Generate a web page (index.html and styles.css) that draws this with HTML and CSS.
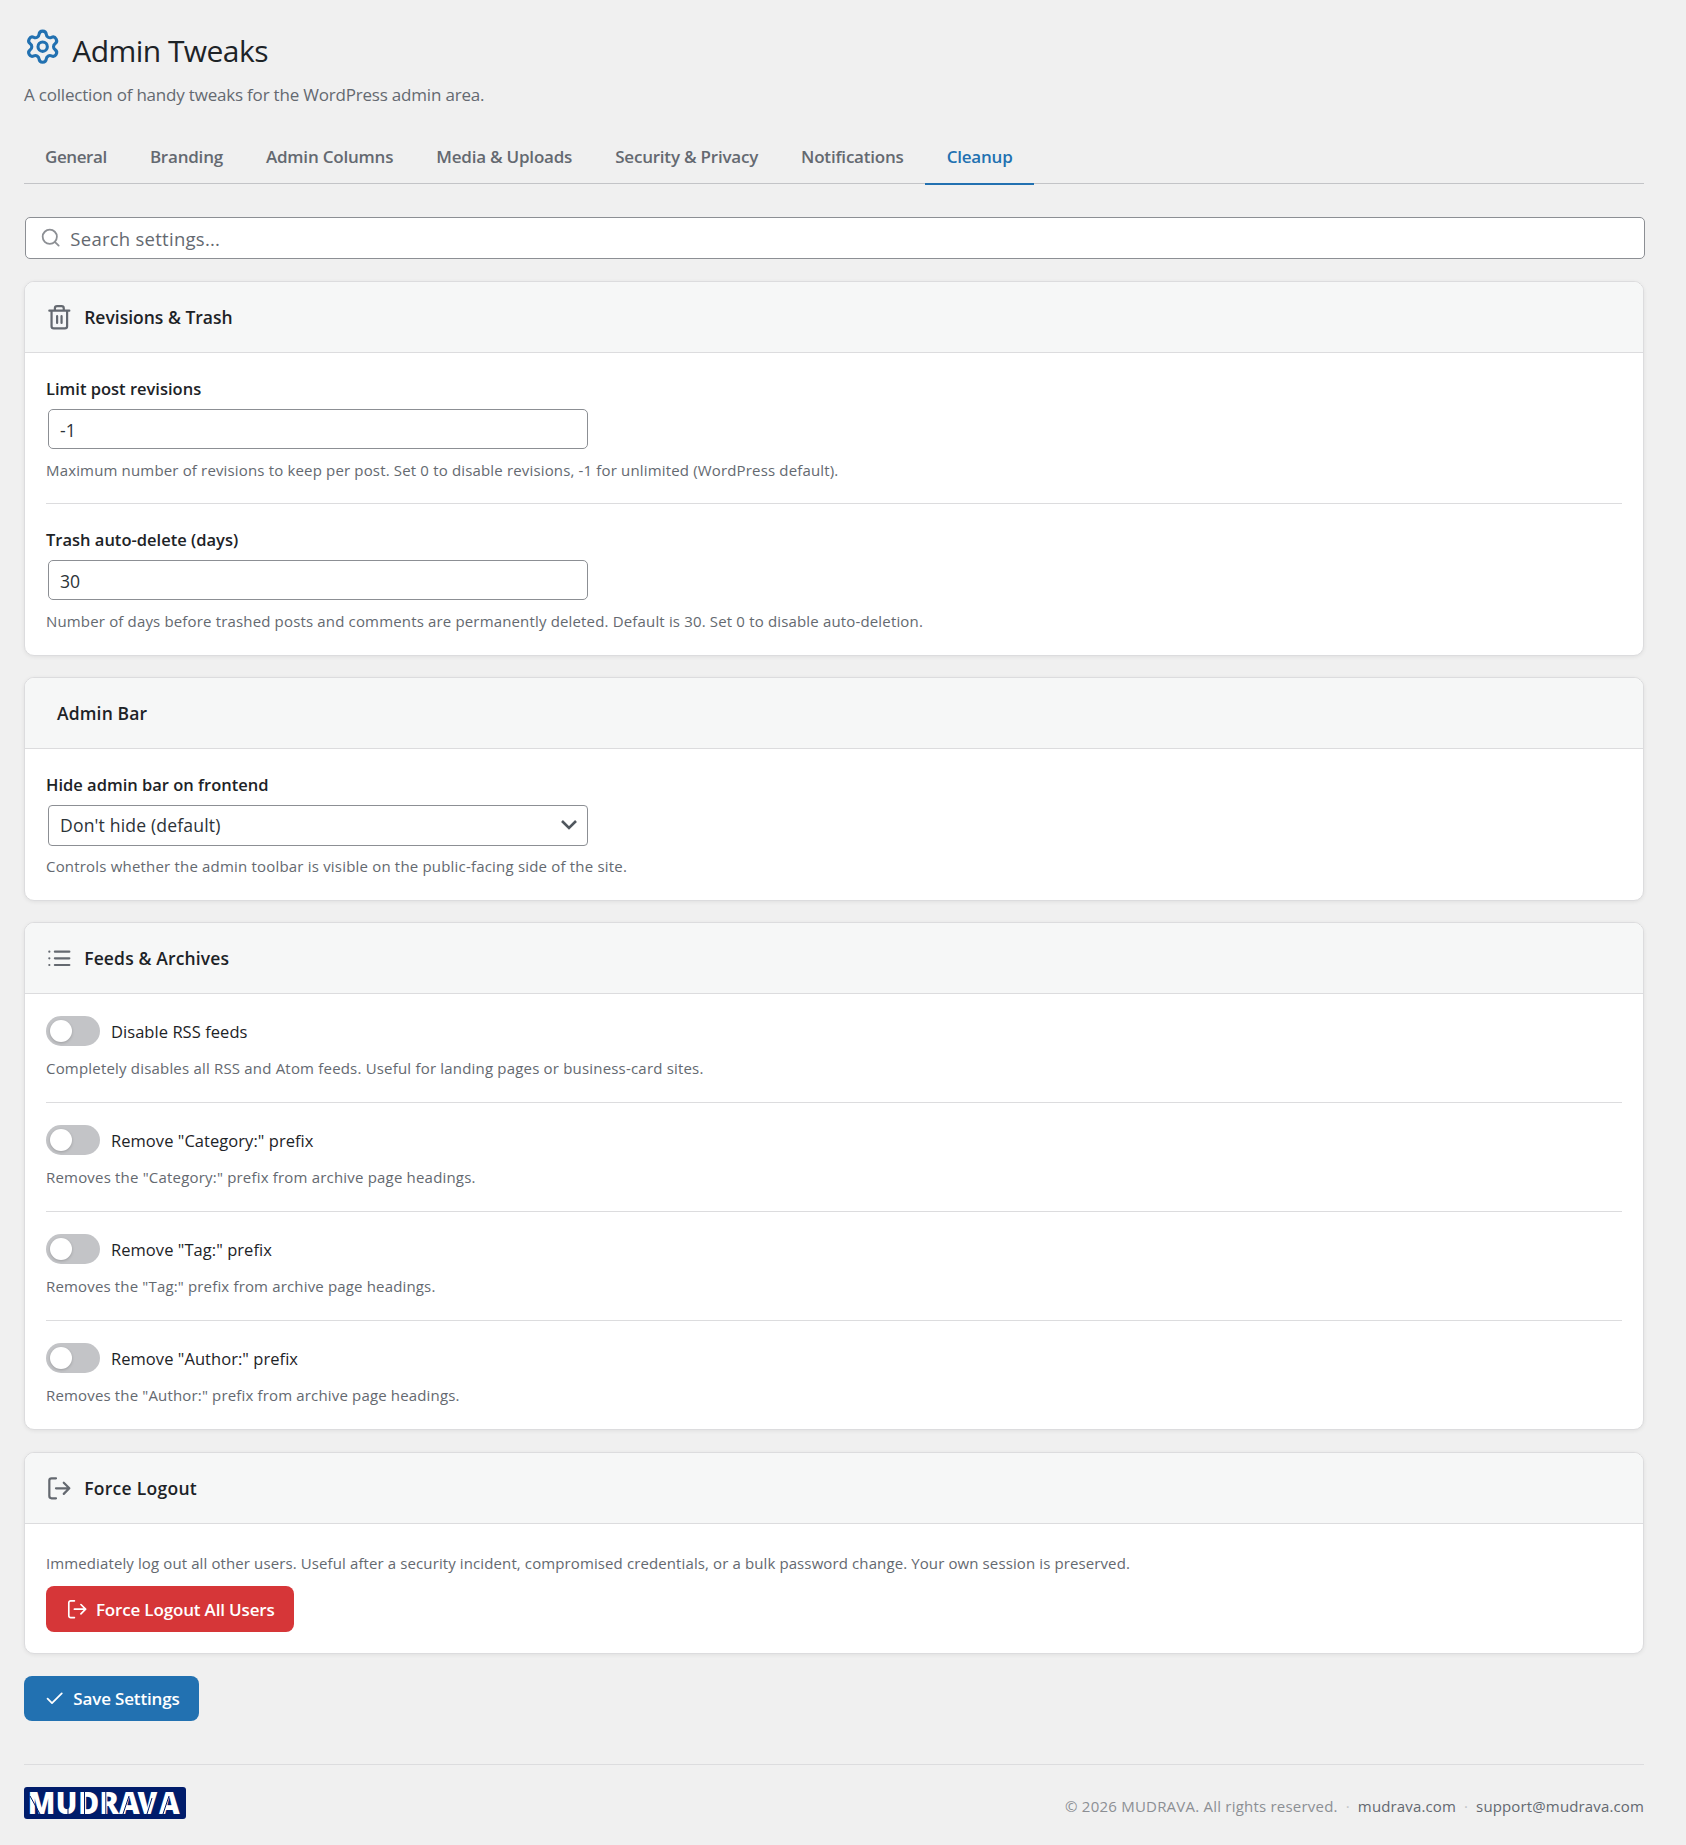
FILE: index.html
```html
<!DOCTYPE html>
<html lang="en">
<head>
<meta charset="utf-8">
<title>Admin Tweaks</title>
<link rel="stylesheet" href="styles.css">
</head>
<body>
<main class="page">
  <header class="page-header">
    <svg class="icon icon-gear" viewBox="0 0 24 24"><path d="M9.671 4.136a2.34 2.34 0 0 1 4.659 0 2.34 2.34 0 0 0 3.319 1.915 2.34 2.34 0 0 1 2.33 4.033 2.34 2.34 0 0 0 0 3.831 2.34 2.34 0 0 1-2.33 4.033 2.34 2.34 0 0 0-3.319 1.915 2.34 2.34 0 0 1-4.659 0 2.34 2.34 0 0 0-3.32-1.915 2.34 2.34 0 0 1-2.33-4.033 2.34 2.34 0 0 0 0-3.831A2.34 2.34 0 0 1 6.35 6.051a2.34 2.34 0 0 0 3.319-1.915"/><circle cx="12" cy="12" r="3"/></svg>
    <h1 class="page-title">Admin Tweaks</h1>
  </header>
  <p class="page-subtitle">A collection of handy tweaks for the WordPress admin area.</p>

  <nav class="tabs">
    <a class="tab tab-first">General</a>
    <a class="tab">Branding</a>
    <a class="tab">Admin Columns</a>
    <a class="tab">Media &amp; Uploads</a>
    <a class="tab">Security &amp; Privacy</a>
    <a class="tab">Notifications</a>
    <a class="tab tab-active">Cleanup</a>
  </nav>

  <div class="search">
    <svg class="icon icon-search" viewBox="0 0 24 24"><circle cx="11" cy="11" r="8"/><path d="m21 21-4.35-4.35"/></svg>
    <span class="search-text">Search settings...</span>
  </div>

  <section class="card card-fields">
    <div class="card-header">
      <svg class="icon icon-card" viewBox="0 0 24 24"><path d="M3 6h18M19 6v14a2 2 0 0 1-2 2H7a2 2 0 0 1-2-2V6M8 6V4a2 2 0 0 1 2-2h4a2 2 0 0 1 2 2v2M10 11v6M14 11v6"/></svg>
      <h2 class="card-title card-title-tight">Revisions &amp; Trash</h2>
    </div>
    <div class="card-body">
      <div class="field">
        <div class="field-label">Limit post revisions</div>
        <div class="input">-1</div>
        <p class="description">Maximum number of revisions to keep per post. Set 0 to disable revisions, -1 for unlimited (WordPress default).</p>
      </div>
      <div class="field">
        <div class="field-label">Trash auto-delete (days)</div>
        <div class="input">30</div>
        <p class="description">Number of days before trashed posts and comments are permanently deleted. Default is 30. Set 0 to disable auto-deletion.</p>
      </div>
    </div>
  </section>

  <section class="card card-fields">
    <div class="card-header card-header-plain">
      <h2 class="card-title">Admin Bar</h2>
    </div>
    <div class="card-body">
      <div class="field">
        <div class="field-label">Hide admin bar on frontend</div>
        <div class="input select"><span>Don't hide (default)</span><svg class="chevron" viewBox="0 0 20 20"><path d="m3 6 7 7 7-7"/></svg></div>
        <p class="description description-wide">Controls whether the admin toolbar is visible on the public-facing side of the site.</p>
      </div>
    </div>
  </section>

  <section class="card">
    <div class="card-header">
      <svg class="icon icon-card" viewBox="0 0 24 24"><path d="M8 6h13M8 12h13M8 18h13M3 6h.01M3 12h.01M3 18h.01"/></svg>
      <h2 class="card-title">Feeds &amp; Archives</h2>
    </div>
    <div class="card-body">
      <div class="toggle-field">
        <div class="toggle-row"><span class="toggle"></span><span class="toggle-label">Disable RSS feeds</span></div>
        <p class="description description-wide">Completely disables all RSS and Atom feeds. Useful for landing pages or business-card sites.</p>
      </div>
      <div class="toggle-field">
        <div class="toggle-row"><span class="toggle"></span><span class="toggle-label">Remove "Category:" prefix</span></div>
        <p class="description description-wide">Removes the "Category:" prefix from archive page headings.</p>
      </div>
      <div class="toggle-field">
        <div class="toggle-row"><span class="toggle"></span><span class="toggle-label">Remove "Tag:" prefix</span></div>
        <p class="description">Removes the "Tag:" prefix from archive page headings.</p>
      </div>
      <div class="toggle-field">
        <div class="toggle-row"><span class="toggle"></span><span class="toggle-label">Remove "Author:" prefix</span></div>
        <p class="description">Removes the "Author:" prefix from archive page headings.</p>
      </div>
    </div>
  </section>

  <section class="card">
    <div class="card-header">
      <svg class="icon icon-card" viewBox="0 0 24 24"><path d="M9 21H5a2 2 0 0 1-2-2V5a2 2 0 0 1 2-2h4M16 17l5-5-5-5M21 12H9"/></svg>
      <h2 class="card-title card-title-wide">Force Logout</h2>
    </div>
    <div class="card-body logout-body">
      <p class="description description-tight">Immediately log out all other users. Useful after a security incident, compromised credentials, or a bulk password change. Your own session is preserved.</p>
      <button class="button button-danger"><svg class="icon icon-exit" viewBox="0 0 24 24"><path d="M9 21H5a2 2 0 0 1-2-2V5a2 2 0 0 1 2-2h4M16 17l5-5-5-5M21 12H9"/></svg><span>Force Logout All Users</span></button>
    </div>
  </section>

  <button class="button button-primary"><svg class="icon icon-check" viewBox="0 0 24 24"><path d="M20 6 9 17l-5-5"/></svg><span>Save Settings</span></button>

  <footer class="footer">
    <svg class="logo" viewBox="0 0 162 32" role="img" aria-label="MUDRAVA">
      <rect class="logo-bg" width="162" height="32" rx="3"/>
      <g transform="scale(.95 1)"><text class="logo-text" y="27" x="4 33.5 57 79.5 100 119.5 142">MUDRAVA</text></g>
      <path class="logo-cut" d="M6 9l10 18M44 20v8M60.5 4v24M81.8 4v24M105 9l-6 18M123 27l5-16M145 9l-6 18"/>
    </svg>
    <div class="footer-text">
      <span class="copyright">© 2026 MUDRAVA. All rights reserved.</span>
      <span class="dot">·</span>
      <a class="footer-link">mudrava.com</a>
      <span class="dot">·</span>
      <a class="footer-link">support@mudrava.com</a>
    </div>
  </footer>
</main>
</body>
</html>
```

FILE: styles.css
```css
* { box-sizing: border-box; }

body {
  margin: 0;
  background: #f0f0f0;
  color: #1d2327;
  font-family: "Open Sans", "Noto Sans", sans-serif;
}

h1, h2, p { margin: 0; font-weight: 400; }

.page {
  width: 1686px;
  min-height: 1845px;
  padding: 28px 42px 0 24px;
}

.icon {
  flex: none;
  fill: none;
  stroke: currentColor;
  stroke-width: 2;
  stroke-linecap: round;
  stroke-linejoin: round;
}

.page-header { display: flex; height: 40px; gap: 11px; }
.icon-gear { width: 37.33px; height: 37.33px; color: #2271b1; }
.page-title { padding-top: 4px; font-size: 30px; letter-spacing: -.55px; line-height: 38px; white-space: nowrap; }
.page-subtitle { margin-top: 15px; font-size: 17px; letter-spacing: -.2px; line-height: 24px; color: #646970; }

.tabs { display: flex; margin-top: 20px; border-bottom: 1px solid #c3c4c7; }
.tab {
  margin-bottom: -2px;
  padding: 17px 21.5px 13px;
  border-bottom: 2px solid transparent;
  font-size: 17px;
  font-weight: 600;
  letter-spacing: -.21px;
  line-height: 26px;
  color: #646970;
  white-space: nowrap;
}
.tab-first { padding-left: 21px; letter-spacing: -.4px; }
.tab-active { color: #2271b1; border-color: #2271b1; }

.search {
  display: flex;
  align-items: center;
  gap: 9px;
  height: 42px;
  margin: 33px -1px 0 1px;
  padding-left: 14px;
  border: 1px solid #8c8f94;
  border-radius: 5px;
  background: #fff;
}
.icon-search { width: 21.33px; height: 21.33px; color: #8c8f94; }
.search-text { padding-top: 1px; font-size: 18.5px; letter-spacing: .26px; color: #646970; }

.card {
  margin-top: 22px;
  border: 1px solid #dcdcde;
  border-radius: 10px;
  background: #fff;
  box-shadow: 0 1px 4px rgba(0, 0, 0, .07);
  overflow: hidden;
}
.card-fields { margin-bottom: -1px; }
.card-header {
  display: flex;
  align-items: center;
  gap: 11.5px;
  height: 71px;
  padding: 0 21px;
  border-bottom: 1px solid #dcdcde;
  background: #f6f7f7;
}
.card-header-plain { padding-left: 32px; }
.icon-card { width: 26.67px; height: 26.67px; color: #646970; }
.card-title { font-size: 17.5px; font-weight: 600; letter-spacing: .15px; line-height: 26px; }
.card-title-tight { letter-spacing: 0; }
.card-title-wide { letter-spacing: .28px; }
.card-body { padding: 0 21px; }

.field { padding: 24px 0 22px; border-bottom: 1px solid #dcdcde; }
.field:last-child { padding-bottom: 23px; border-bottom: 0; }
.field-label { font-size: 16.5px; font-weight: 600; line-height: 24px; }
.input {
  display: flex;
  align-items: center;
  justify-content: space-between;
  width: 540px;
  height: 40px;
  margin: 8px 0 0 2px;
  padding: 2px 8px 0 11px;
  border: 1px solid #8c8f94;
  border-radius: 5px;
  font-size: 17.6px;
  color: #2c3338;
}
.select { height: 41px; margin-bottom: -1px; padding: 0 8px 1px 11px; border-radius: 4px; letter-spacing: .15px; }
.chevron { width: 20px; height: 20px; fill: none; stroke: #50575e; stroke-width: 2.6; }
.description { font-size: 15px; letter-spacing: .16px; line-height: 22px; color: #646970; white-space: nowrap; }
.description-wide { letter-spacing: .19px; }
.description-tight { letter-spacing: .11px; }
.field .description { margin-top: 10px; }

.toggle-field { padding: 22px 0 23px; border-bottom: 1px solid #dcdcde; }
.toggle-field:last-child { border-bottom: 0; }
.toggle-field .description { margin-top: 11px; }
.toggle-row { display: flex; align-items: center; gap: 11px; height: 30px; }
.toggle { flex: none; width: 54px; height: 30px; padding: 4px; border-radius: 15px; background: #c3c4c7; }
.toggle::before {
  content: "";
  display: block;
  width: 22px;
  height: 22px;
  border-radius: 50%;
  background: #fff;
  box-shadow: 0 1px 3px rgba(0, 0, 0, .2);
}
.toggle-label { font-size: 16.5px; letter-spacing: .05px; }

.logout-body { padding: 28px 21px 21px; }
.button {
  display: flex;
  align-items: center;
  border: 0;
  border-radius: 8px;
  color: #fff;
  font: 600 17px "Open Sans", "Noto Sans", sans-serif;
  letter-spacing: -.16px;
  white-space: nowrap;
}
.button-danger { width: 248px; height: 46px; margin-top: 12px; padding: 0 0 0 19.5px; gap: 8px; background: #d63638; }
.button-primary { width: 175px; height: 45px; margin-top: 22px; padding: 0 0 0 20px; gap: 8px; background: #2271b1; }
.icon-exit { width: 22.4px; height: 22.4px; stroke-width: 1.8; }
.icon-check { width: 21.33px; height: 21.33px; }

.footer {
  display: flex;
  justify-content: space-between;
  align-items: flex-start;
  margin-top: 43px;
  padding-top: 22px;
  border-top: 1px solid #dcdcde;
}
.logo { width: 162px; height: 32px; overflow: visible; }
.logo-bg { fill: #001c6b; }
.logo-text { fill: #fff; font: 800 30px "Open Sans", sans-serif; }
.logo-cut { fill: none; stroke: #001c6b; stroke-width: 1; }
.footer-text { display: flex; gap: 8px; padding-top: 8px; font-size: 15px; letter-spacing: .14px; line-height: 22px; color: #646970; }
.copyright { color: #8c8f94; letter-spacing: .22px; }
.dot { color: #c3c4c7; }
```
